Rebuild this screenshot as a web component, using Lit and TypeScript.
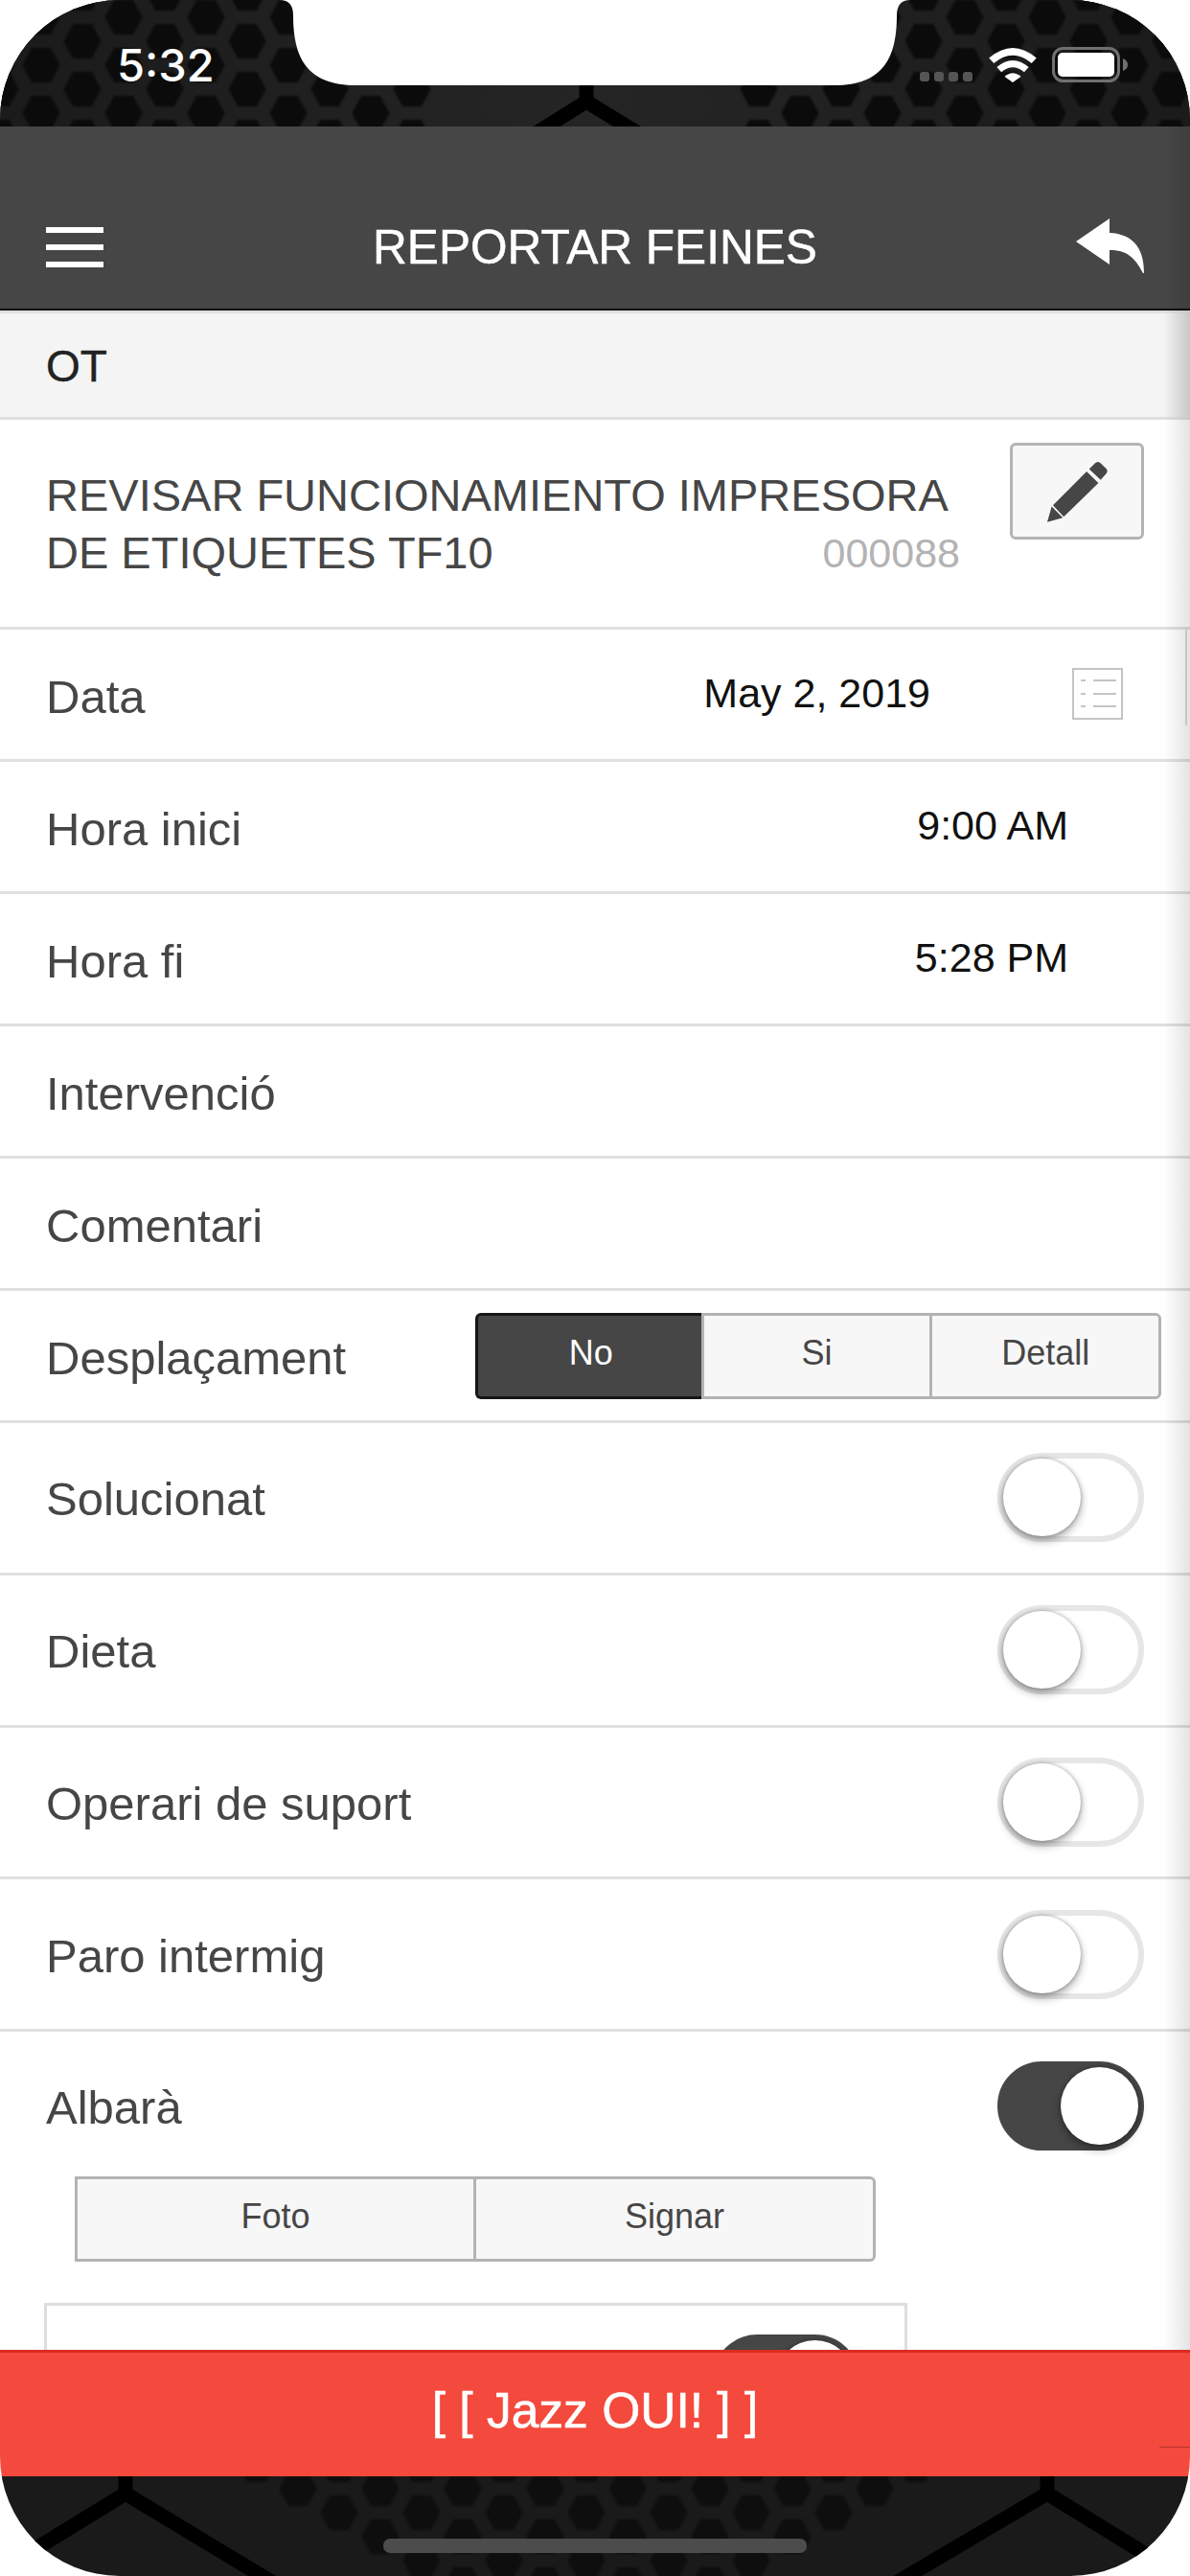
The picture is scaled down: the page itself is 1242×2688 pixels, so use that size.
import { LitElement, html, css, svg } from "lit";
import { customElement } from "lit/decorators.js";

function hexPoints(cx: number, cy: number, w: number, h: number): string {
  const a = w / 2, q = w / 4, b = h / 2;
  return `${cx - a},${cy} ${cx - q},${cy - b} ${cx + q},${cy - b} ${cx + a},${cy} ${cx + q},${cy + b} ${cx - q},${cy + b}`;
}

function hexes(x0: number, y0: number, cols: number, rows: number, fill: string, skip: (x: number, y: number) => boolean) {
  const out = [];
  for (let r = -1; r < rows; r++) {
    for (let c = -1; c < cols; c++) {
      const xa = x0 + c * 86, ya = y0 + r * 50;
      if (!skip(xa, ya)) out.push(svg`<polygon points=${hexPoints(xa, ya, 39, 36)} fill=${fill}/>`);
      const xb = xa + 43, yb = ya + 25;
      if (!skip(xb, yb)) out.push(svg`<polygon points=${hexPoints(xb, yb, 39, 36)} fill=${fill}/>`);
    }
  }
  return out;
}

@customElement("app-toggle")
class AppToggle extends LitElement {
  static properties = { on: { type: Boolean } };
  on = false;
  static styles = css`
    :host { display: block; flex: none; }
    .track {
      box-sizing: border-box; width: 153px; height: 93px; border-radius: 47px;
      border: 6px solid #e6e6e6; background: #fff; display: flex; justify-content: flex-start;
    }
    .track.on { background: #464646; border-color: #464646; justify-content: flex-end; }
    .thumb {
      width: 81px; height: 81px; border-radius: 50%; background: #fff;
      box-shadow: 0 5px 10px rgba(0, 0, 0, 0.32), 0 0 4px rgba(0, 0, 0, 0.3);
    }
  `;
  render() {
    return html`<div class="track ${this.on ? "on" : ""}"><div class="thumb"></div></div>`;
  }
}

@customElement("app-root")
class AppRoot extends LitElement {
  static styles = css`
    :host { display: block; width: 1242px; height: 2688px; background: #fff; font-family: "Liberation Sans", Arial, sans-serif; }
    .device {
      position: relative; width: 1242px; height: 2688px; border-radius: 125px; overflow: hidden;
      display: flex; flex-direction: column; background: #fff;
    }
    .top { position: relative; flex: none; height: 132px; background: #1c1c1c; }
    .bg { position: absolute; left: 0; top: 0; display: block; }
    .hex { filter: blur(1px); }
    .status {
      position: relative; box-sizing: border-box; height: 132px; display: flex; justify-content: space-between;
      padding: 41px 64px 0 122px;
    }
    .time { font-family: Inter, "Liberation Sans", sans-serif; font-weight: 500; font-size: 47px; line-height: 54px; color: #fff; }
    .status-icons { display: flex; align-items: flex-start; padding-top: 1px; }
    .dots { display: flex; gap: 5px; margin-top: 33px; margin-right: 17px; }
    .dots i { display: block; width: 10px; height: 10px; border-radius: 3px; background: #555; }
    .wifi { display: block; margin-top: 8px; margin-right: 16px; }
    .battery { display: block; margin-top: 7px; }
    .notch { position: absolute; left: 0; top: 0; display: block; }
    .nav {
      flex: none; box-sizing: border-box; height: 192px; background: #464646; border-bottom: 2px solid #0d0d0d;
      display: flex; align-items: center; justify-content: space-between; padding: 62px 48px 0;
      color: #fff;
    }
    .burger { width: 60px; margin-right: 11px; display: flex; flex-direction: column; gap: 12px; }
    .burger i { display: block; height: 6px; background: #fff; }
    .nav-title { font-size: 49.6px; line-height: 60px; -webkit-text-stroke: 0.5px #fff; }
    .back { display: block; margin-top: -4px; }
    .main { flex: none; height: 2128px; overflow: hidden; background: #fff; color: #464646; }
    .section {
      box-sizing: border-box; height: 114px; border-top: 3px solid #e0e0e0; border-bottom: 3px solid #e0e0e0;
      background: linear-gradient(to right, transparent calc(100% - 28px), rgba(0, 0, 0, 0.08)), #f4f4f4;
      display: flex; align-items: center; padding: 2px 48px 0; font-size: 46px; color: #222; -webkit-text-stroke: 0.4px #222;
    }
    .row {
      box-sizing: border-box; height: 138px; border-bottom: 3px solid #e0e0e0; display: flex; align-items: center;
      padding: 0 48px; font-size: 49px; line-height: 56px;
    }
    .row.tall { height: 158.75px; }
    .label { flex: 1; padding-top: 5px; }
    .row.tall .label { padding-top: 3px; }
    .value { font-size: 43px; line-height: 50px; color: #111; padding-bottom: 4px; }
    .value.time-val { margin-right: 79px; }
    .row.date-row { position: relative; padding-right: 70px; }
    .value.date { margin-right: 148px; padding-bottom: 3px; }
    .list-icon { display: block; flex: none; margin-top: -1px; }
    .edge-line { position: absolute; right: 3px; top: 0; width: 2px; height: 100px; background: #dcdcdc; }
    .title-row {
      box-sizing: border-box; height: 219px; border-bottom: 3px solid #e0e0e0; display: flex; align-items: flex-start;
      padding: 24px 48px 0 48px;
    }
    .title-text { flex: 1; padding-top: 25px; font-size: 47px; line-height: 60px; }
    .code { float: right; margin-right: 52px; font-size: 43px; line-height: 60px; color: #b3b3b3; }
    .edit {
      box-sizing: border-box; flex: none; width: 140px; height: 101px; border: 3px solid #b3b3b3; border-radius: 6px;
      background: #f7f7f7; display: flex; align-items: center; justify-content: center;
    }
    .edit svg { display: block; }
    .seg { display: flex; box-sizing: border-box; font-size: 36px; }
    .seg div {
      box-sizing: border-box; flex: 1; display: flex; align-items: center; justify-content: center; padding-bottom: 5px;
      background: #f7f7f7; border: 3px solid #b3b3b3; border-left-width: 0; color: #464646;
    }
    .seg div:last-child { border-radius: 0 6px 6px 0; }
    .seg .active { background: #464646; color: #fff; border: 3px solid #161616; border-right-width: 0; border-radius: 6px 0 0 6px; }
    .seg-3 { width: 716px; height: 90px; margin-right: -18px; }
    .seg-3 div { border-left-width: 3px; margin-left: -3px; }
    .seg-3 div:first-child { margin-left: 0; }
    .albara { box-sizing: border-box; height: 151px; display: flex; align-items: flex-start; padding: 31px 48px 0; font-size: 49px; line-height: 56px; }
    .albara .label { padding-top: 20px; }
    .seg-2 { width: 836px; height: 89px; margin-left: 78px; }
    .seg-2 div { border-left-width: 0; }
    .seg-2 div:first-child { border-left-width: 3px; border-right-width: 3px; flex: none; width: 419px; }
    .card {
      box-sizing: border-box; width: 901px; height: 200px; margin: 43px 0 0 46px; border: 3px solid #ddd;
      padding: 30px 47px 0 0; display: flex; justify-content: flex-end;
    }
    .shade {
      position: absolute; top: 132px; right: 0; width: 28px; height: 2320px;
      background: linear-gradient(to right, rgba(0, 0, 0, 0), rgba(0, 0, 0, 0.11));
    }
    .cta {
      position: relative; flex: none; box-sizing: border-box; height: 132px; background: #f4493d; border-top: 3px solid #dd2b20;
      display: flex; align-items: center; justify-content: center; color: #fff; font-size: 51.5px; padding-bottom: 10px;
      -webkit-text-stroke: 0.6px #fff;
    }
    .cta-line { position: absolute; right: 0; top: 98px; width: 32px; height: 1px; background: #b5362d; }
    .bottom { position: relative; flex: none; height: 104px; background: #1a1a1a; }
    .home { position: absolute; left: 400px; top: 65px; width: 442px; height: 15px; border-radius: 7px; background: #4c4c4c; }
  `;

  private topBg() {
    return html`<svg class="bg" width="1242" height="132" viewBox="0 0 1242 132">
      <defs><linearGradient id="tg" x1="0" x2="1"><stop offset="0" stop-color="#1b1b1b"/><stop offset="0.5" stop-color="#252525"/><stop offset="1" stop-color="#1b1b1b"/></linearGradient></defs>
      <rect width="1242" height="132" fill="url(#tg)"/>
      <g class="hex">
        ${hexes(43, 18, 6, 4, "#0b0b0b", (x) => x > 431)}
        ${hexes(835, 18, 6, 4, "#0b0b0b", (x) => x < 791)}
      </g>
      <path d="M612,88 V106 M612,106 L542,150 M612,106 L684,150" stroke="#000" stroke-width="15" fill="none"/>
    </svg>`;
  }

  private bottomBg() {
    const skip = (x: number, y: number) => x < 273 + 1.8 * y || x > 946 - 1.8 * y;
    return html`<svg class="bg" width="1242" height="104" viewBox="0 0 1242 104">
      <g class="hex">${hexes(10, 38, 16, 4, "#0e0e0e", skip)}</g>
      <path d="M131,0 V18 M131,18 L30,80 M131,18 L300,120" stroke="#000" stroke-width="15" fill="none"/>
      <path d="M1093,0 V18 M1093,18 L920,120 M1093,18 L1210,90" stroke="#000" stroke-width="15" fill="none"/>
    </svg>`;
  }

  private row(label: string, value?: string) {
    return html`<div class="row"><span class="label">${label}</span>${value ? html`<span class="value time-val">${value}</span>` : ""}</div>`;
  }

  private toggleRow(label: string) {
    return html`<div class="row tall"><span class="label">${label}</span><app-toggle></app-toggle></div>`;
  }

  render() {
    return html`
      <div class="device">
        <div class="top">
          ${this.topBg()}
          <div class="status">
            <span class="time">5:32</span>
            <div class="status-icons">
              <div class="dots"><i></i><i></i><i></i><i></i></div>
              <svg class="wifi" width="50" height="36" viewBox="397 150 146 106">
                <path fill="#fff" d="M397,181 Q470,119 543,181 L528,197 Q470,149 412,197Z"/>
                <path fill="#fff" d="M421,209 Q470,167 519,209 L505,224 Q470,195 435,224Z"/>
                <path fill="#fff" d="M445,238 Q470,216 495,238 L470,256Z"/>
              </svg>
              <svg class="battery" width="80" height="38" viewBox="0 0 80 38">
                <rect x="1.5" y="1.5" width="68" height="34" rx="10" fill="none" stroke="#707070" stroke-width="3"/>
                <rect x="6" y="6" width="59" height="25" rx="5" fill="#fff"/>
                <path d="M74,12 Q79,14 79,18.500 Q79,23 74,25Z" fill="#707070"/>
              </svg>
            </div>
          </div>
        </div>
        <div class="nav">
          <div class="burger"><i></i><i></i><i></i></div>
          <span class="nav-title">REPORTAR FEINES</span>
          <svg class="back" width="71" height="57" viewBox="1123 228 71 57">
            <path fill="#fff" d="M1123,252 L1158,228 V243 C1180,244 1194,256 1194,285 L1193,285 C1184,268 1176,261 1158,261 V276Z"/>
          </svg>
        </div>
        <div class="main">
          <div class="section">OT</div>
          <div class="title-row">
            <div class="title-text">REVISAR FUNCIONAMIENTO IMPRESORA<br />DE ETIQUETES TF10<span class="code">000088</span></div>
            <div class="edit">
              <svg width="63" height="64" viewBox="336 833 190 192">
                <path fill="#464646" d="M354,972 L460,866 L497,902 L388,1008Z"/>
                <path fill="#464646" d="M336,1025 L350,976 L385,1011Z"/>
                <path fill="#464646" d="M468,858 L486,840 Q494,832 502,838 L521,856 Q529,864 521,873 L504,892Z"/>
              </svg>
            </div>
          </div>
          <div class="row date-row">
            <span class="label">Data</span>
            <span class="value date">May 2, 2019</span>
            <svg class="list-icon" width="53" height="54" viewBox="0 0 53 54">
              <rect x="1" y="1" width="51" height="52" fill="#fff" stroke="#c4c4c4" stroke-width="2"/>
              <path d="M9,13 H14 M22,13 H46 M9,27 H14 M22,27 H46 M9,40 H14 M22,40 H46" stroke="#c4c4c4" stroke-width="2"/>
            </svg>
            <span class="edge-line"></span>
          </div>
          ${this.row("Hora inici", "9:00 AM")}
          ${this.row("Hora fi", "5:28 PM")}
          ${this.row("Intervenció")}
          ${this.row("Comentari")}
          <div class="row">
            <span class="label">Desplaçament</span>
            <div class="seg seg-3"><div class="active">No</div><div>Si</div><div>Detall</div></div>
          </div>
          ${this.toggleRow("Solucionat")}
          ${this.toggleRow("Dieta")}
          ${this.toggleRow("Operari de suport")}
          ${this.toggleRow("Paro intermig")}
          <div class="albara"><span class="label">Albarà</span><app-toggle on></app-toggle></div>
          <div class="seg seg-2"><div>Foto</div><div>Signar</div></div>
          <div class="card"><app-toggle on></app-toggle></div>
        </div>
        <div class="cta">[ [ Jazz OUI! ] ]<span class="cta-line"></span></div>
        <div class="bottom">
          ${this.bottomBg()}
          <div class="home"></div>
        </div>
        <div class="shade"></div>
        <svg class="notch" width="1242" height="90" viewBox="0 0 1242 90">
          <path fill="#fff" d="M292,0 Q306,0 306,16 C306,60 320,89 372,89 L871,89 C922,89 936,60 936,16 Q936,0 950,0Z"/>
        </svg>
      </div>
    `;
  }
}
